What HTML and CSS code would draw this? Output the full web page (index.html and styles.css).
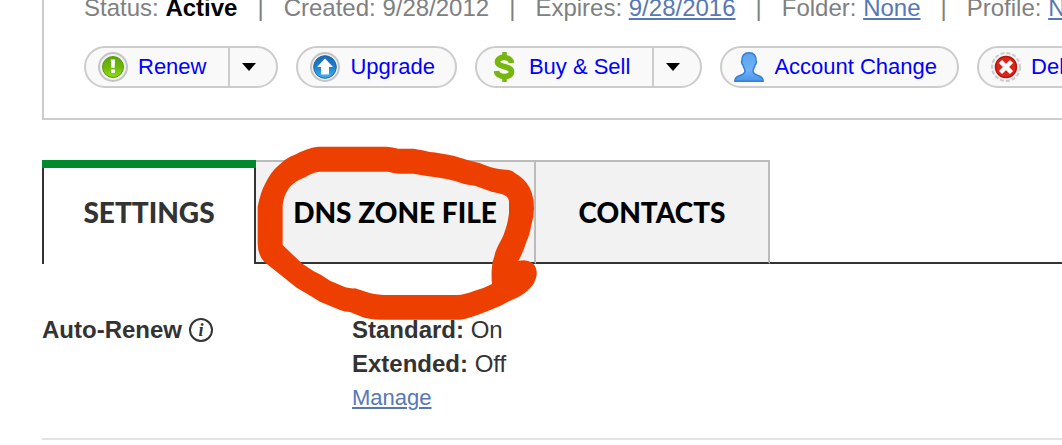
FILE: index.html
```html
<!DOCTYPE html>
<html lang="en">
<head>
<meta charset="utf-8">
<title>Domain Details</title>
<link rel="stylesheet" href="styles.css">
</head>
<body>
<main class="page">
  <section class="summary">
    <div class="facts">
      <span>Status: <strong class="active">Active</strong></span>
      <span class="bar">|</span>
      <span>Created: 9/28/2012</span>
      <span class="bar">|</span>
      <span>Expires: <a href="#">9/28/2016</a></span>
      <span class="bar">|</span>
      <span>Folder: <a href="#">None</a></span>
      <span class="bar">|</span>
      <span>Profile: <a href="#">None</a></span>
    </div>
    <div class="actions">
      <div class="pill">
        <button class="action split" type="button">
          <svg class="icon" viewBox="0 0 30 30" aria-hidden="true">
            <defs>
              <linearGradient id="green" x1="0" y1="0" x2="0" y2="1"><stop offset="0" stop-color="#5aa50a"/><stop offset=".5" stop-color="#6fb80a"/><stop offset="1" stop-color="#8fdc10"/></linearGradient>
            </defs>
            <circle cx="15" cy="15" r="14" fill="#f1f1f1" stroke="#c4c4c4" stroke-width="2"/>
            <circle cx="15" cy="15" r="10.5" fill="url(#green)" stroke="#559c08" stroke-width="1"/>
            <path d="M12.800 7.500h4.400l-.6 8.500h-3.200z" fill="#fff"/>
            <rect x="13" y="17.500" width="4" height="3.500" fill="#fff"/>
          </svg>
          Renew
        </button>
        <button class="more" type="button" aria-label="More renew options"><svg class="caret" viewBox="0 0 14 8" aria-hidden="true"><path d="M0 0h14L7 8z"/></svg></button>
      </div>
      <div class="pill">
        <button class="action" type="button">
          <svg class="icon" viewBox="0 0 30 30" aria-hidden="true">
            <defs>
              <linearGradient id="blue" x1="0" y1="0" x2="0" y2="1"><stop offset="0" stop-color="#1b67b4"/><stop offset=".5" stop-color="#1c7fd2"/><stop offset="1" stop-color="#43b4f2"/></linearGradient>
            </defs>
            <circle cx="15" cy="15" r="14" fill="#f1f1f1" stroke="#c4c4c4" stroke-width="2"/>
            <circle cx="15" cy="15" r="11.300" fill="url(#blue)" stroke="#1a66ac" stroke-width="1"/>
            <path d="M15 6.500l8 8.500h-4v7.500h-8V15H7z" fill="#fff"/>
          </svg>
          Upgrade
        </button>
      </div>
      <div class="pill">
        <button class="action split" type="button">
          <svg class="icon" viewBox="0 0 30 30" aria-hidden="true">
            <path d="M15.500 0v6M15.500 24v6" fill="none" stroke="#76b60d" stroke-width="4.500"/>
            <path d="M22.500 11C22 4 8.500 3.500 8.500 10C8.500 15.500 22.500 13.500 22.500 19.800C22.500 26.500 8 26 7.500 19" fill="none" stroke="#76b60d" stroke-width="5.600"/>
          </svg>
          Buy &amp; Sell
        </button>
        <button class="more" type="button" aria-label="More buy and sell options"><svg class="caret" viewBox="0 0 14 8" aria-hidden="true"><path d="M0 0h14L7 8z"/></svg></button>
      </div>
      <div class="pill">
        <button class="action" type="button">
          <svg class="icon" viewBox="0 0 30 30" aria-hidden="true">
            <defs>
              <linearGradient id="person" x1="0" y1="0" x2="0" y2="1"><stop offset="0" stop-color="#5aa3ee"/><stop offset=".6" stop-color="#6eb2f8"/><stop offset="1" stop-color="#4795ea"/></linearGradient>
            </defs>
            <path d="M15 .8C10 .8 7.500 4 8 8.500C7 9.500 7.800 12.500 9 13C9.500 16 10.800 17 11 18.500C11 21.500 9.500 22.500 6 23.500C2.500 24.500 .8 26 .8 29.200H29.200C29.200 26 27.500 24.500 24 23.500C20.500 22.500 19 21.500 19 18.500C19.200 17 20.500 16 21 13C22.200 12.500 23 9.500 22 8.500C22.500 4 20 .8 15 .8Z" fill="url(#person)" stroke="#347fd2" stroke-width="1.500"/>
          </svg>
          Account Change
        </button>
      </div>
      <div class="pill">
        <button class="action" type="button">
          <svg class="icon" viewBox="0 0 30 30" aria-hidden="true">
            <circle cx="15" cy="15" r="14" fill="#f3f3f3" stroke="#c8cccb" stroke-width="2" stroke-dasharray="4 2"/>
            <circle cx="15" cy="15" r="10.500" fill="#dc2418" stroke="#b81510" stroke-width="1.500"/>
            <path d="M9.500 9.500l11 11M20.500 9.500l-11 11" stroke="#fff" stroke-width="4.500"/>
          </svg>
          Delete
        </button>
      </div>
    </div>
  </section>

  <nav class="tabs">
    <a class="tab current" href="#">SETTINGS</a>
    <a class="tab zone" href="#">DNS ZONE FILE</a>
    <a class="tab contacts" href="#">CONTACTS</a>
    <svg class="marker" viewBox="0 0 960 600" aria-hidden="true">
      <path fill="#ec3f00" fill-rule="evenodd" d="M235 35H440Q458 36 475 41H520Q548 45 570 51Q600 54 640 62L690 77Q720 82 750 96Q780 104 800 104Q815 105 828 116Q850 130 858 142Q882 170 882 220Q882 245 874 270Q869 300 860 318Q849 353 835 378Q860 372 877 384Q892 396 890 420Q886 445 867 463Q845 485 810 497Q780 515 745 527Q690 550 660 554H420Q385 553 365 545L330 531Q315 531 300 525L240 500Q205 478 170 458L110 410L73 381Q53 360 53 325V215Q62 170 75 147Q92 110 118 89Q140 68 163 60Q205 37 235 35Z M240 110H445Q460 115 475 116H520L565 124Q600 127 645 138L675 148Q690 150 705 152Q730 161 755 170L785 177Q805 183 807 198V235Q803 265 798 278Q791 302 783 316Q768 342 764 360Q756 380 755 405Q754 430 756 447Q730 461 704 467Q675 479 650 480H430Q400 478 382 472L345 460Q330 461 316 457L270 437Q245 419 220 408L185 385L128 330V210Q132 180 147 159Q162 140 195 127Q216 112 240 110Z"/>
    </svg>
  </nav>

  <section class="setting">
    <div class="name">Auto-Renew <button class="info" type="button" aria-label="About auto-renew">i</button></div>
    <div class="values">
      <div><strong>Standard:</strong> On</div>
      <div><strong>Extended:</strong> Off</div>
      <div class="manage"><a href="#">Manage</a></div>
    </div>
  </section>
</main>
</body>
</html>
```
FILE: styles.css
```css
* {
  box-sizing: border-box;
}

body {
  margin: 0;
  background: #fff;
  color: #333;
  font-family: "Liberation Sans", Arial, sans-serif;
  font-size: 24px;
  overflow: hidden;
}

a {
  color: #5877b5;
  text-decoration-thickness: 2px;
  text-underline-offset: 2px;
}

button {
  font: inherit;
}

.page {
  padding-left: 42px;
}

.summary {
  padding: 0 0 30px 40px;
  border: solid #ccc;
  border-width: 0 0 2px 2px;
  overflow-x: clip;
}

.facts {
  display: flex;
  gap: 20px;
  color: #808080;
  line-height: 16px;
  white-space: nowrap;
}

.active {
  color: #000;
}

.actions {
  display: flex;
  gap: 18px;
  margin-top: 30px;
}

.pill {
  display: flex;
  flex: none;
  height: 42px;
  border: 2px solid #ccc;
  border-radius: 21px;
  background: #f9f9f9;
}

.action {
  display: flex;
  align-items: center;
  gap: 10px;
  padding: 0 20px 0 12px;
  border: 0;
  background: none;
  color: #00f;
  font-size: 22px;
  white-space: nowrap;
}

.split {
  padding-right: 22px;
}

.icon {
  width: 30px;
  height: 30px;
}

.more {
  display: flex;
  align-items: center;
  padding: 0 20px 0 12px;
  border: 0;
  border-left: 2px solid #ccc;
  background: none;
}

.caret {
  width: 14px;
  height: 8px;
}

.tabs {
  position: relative;
  display: flex;
  height: 104px;
  margin-top: 40px;
}

.tabs::after {
  content: "";
  flex: 1;
  border-bottom: 2px solid #333;
}

.tab {
  display: flex;
  align-items: center;
  justify-content: center;
  border: 2px solid #bbb;
  border-bottom-color: #333;
  border-left: 0;
  background: #f2f2f2;
  color: #000;
  font-family: Lato, "Open Sans", sans-serif;
  font-size: 28px;
  font-weight: 900;
  text-decoration: none;
  white-space: nowrap;
}

.current {
  position: relative;
  min-width: 214px;
  border: solid #333;
  border-width: 0 2px;
  background: #fff;
  color: #333;
}

.current::before {
  content: "";
  position: absolute;
  top: 0;
  left: -2px;
  right: -2px;
  height: 8px;
  background: #008a2b;
}

.zone {
  min-width: 280px;
}

.contacts {
  min-width: 234px;
}

.marker {
  position: absolute;
  top: -25px;
  left: 198px;
  width: 320px;
  height: 200px;
  pointer-events: none;
}

.setting {
  display: grid;
  grid-template-columns: 310px 1fr;
  margin-top: 49px;
  padding-bottom: 23px;
  border-bottom: 2px solid #e3e3e3;
  line-height: 34px;
}

.name {
  display: flex;
  align-items: center;
  gap: 7px;
  height: 34px;
  font-weight: bold;
}

.info {
  width: 24px;
  height: 24px;
  padding: 0;
  border: 2px solid #333;
  border-radius: 50%;
  background: none;
  color: #333;
  font: italic bold 18px/18px "Liberation Serif", serif;
}

.manage {
  font-size: 22px;
}
```
